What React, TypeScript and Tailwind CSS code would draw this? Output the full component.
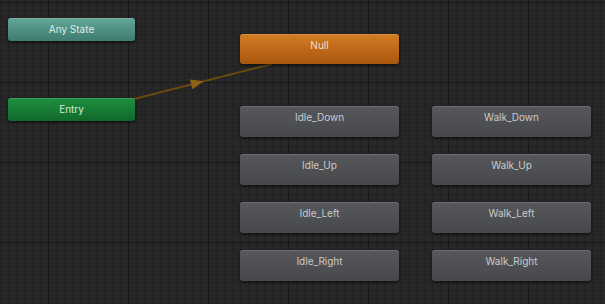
import clsx from "clsx";

type Variant = "any" | "entry" | "default" | "state";

const variantClass: Record<Variant, string> = {
  any: "bg-linear-to-b from-[#62a898] to-[#3f7b70] text-[#dcebe7]",
  entry: "bg-linear-to-b from-[#1d8f3f] to-[#10692b] text-[#d4eadb]",
  default: "bg-linear-to-b from-[#d37c22] to-[#a9570f] text-[#f3dfc8]",
  state: "bg-linear-to-b from-[#56585c] to-[#46484c] text-[#cbcbcb]",
};

// positions are the diagram content itself, so nodes sit absolutely on the canvas
const nodes: { label: string; variant: Variant; className: string }[] = [
  { label: "Any State", variant: "any", className: "left-[8px] top-[18px] w-[127px] h-[23px] pt-[4px]" },
  { label: "Entry", variant: "entry", className: "left-[8px] top-[98px] w-[127px] h-[23px] pt-[4px]" },
  { label: "Null", variant: "default", className: "left-[240px] top-[34px] w-[159px] h-[30px] pt-[4px]" },
  { label: "Idle_Down", variant: "state", className: "left-[240px] top-[106px] w-[159px] h-[31px] pt-[4px]" },
  { label: "Idle_Up", variant: "state", className: "left-[240px] top-[154px] w-[159px] h-[31px] pt-[4px]" },
  { label: "Idle_Left", variant: "state", className: "left-[240px] top-[202px] w-[159px] h-[31px] pt-[4px]" },
  { label: "Idle_Right", variant: "state", className: "left-[240px] top-[250px] w-[159px] h-[31px] pt-[4px]" },
  { label: "Walk_Down", variant: "state", className: "left-[432px] top-[106px] w-[159px] h-[31px] pt-[4px]" },
  { label: "Walk_Up", variant: "state", className: "left-[432px] top-[154px] w-[159px] h-[31px] pt-[4px]" },
  { label: "Walk_Left", variant: "state", className: "left-[432px] top-[202px] w-[159px] h-[31px] pt-[4px]" },
  { label: "Walk_Right", variant: "state", className: "left-[432px] top-[250px] w-[159px] h-[31px] pt-[4px]" },
];

function StateNode({ label, variant, className }: { label: string; variant: Variant; className: string }) {
  return (
    <div
      className={clsx(
        "absolute rounded-[3px] text-center text-[10px] leading-[14px] shadow-[inset_0_1px_0_rgba(255,255,255,0.14),0_1px_3px_rgba(0,0,0,0.7)]",
        variantClass[variant],
        className,
      )}
    >
      {label}
    </div>
  );
}

export default function App() {
  return (
    <div
      className={clsx(
        "relative h-[304px] w-[605px] overflow-hidden bg-[#272727] font-['Inter','Noto_Sans',sans-serif]",
        "bg-[linear-gradient(to_right,#181818_1px,transparent_1px),linear-gradient(to_bottom,#181818_1px,transparent_1px),linear-gradient(to_right,#212121_1px,transparent_1px),linear-gradient(to_bottom,#212121_1px,transparent_1px)]",
        "bg-[size:80px_80px,80px_80px,8px_8px,8px_8px]",
        "bg-[position:48px_2px,48px_2px,0px_2px,0px_2px]",
      )}
    >
      <svg className="pointer-events-none absolute inset-0" width={605} height={304}>
        <line x1={134} y1={99} x2={272} y2={64} stroke="#694812" strokeWidth={2} />
        <g transform="translate(197 83) rotate(-14.2)">
          <polygon points="7,0 -6,-5 -6,5" fill="#8e6214" />
        </g>
      </svg>
      {nodes.map((n) => (
        <StateNode key={n.label} {...n} />
      ))}
    </div>
  );
}
